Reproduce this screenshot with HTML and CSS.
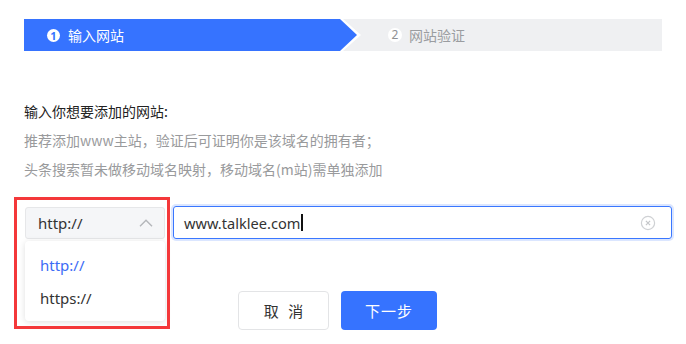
FILE: index.html
```html
<!DOCTYPE html>
<html lang="zh-CN">
<head>
<meta charset="utf-8">
<title>添加网站</title>
<link rel="stylesheet" href="styles.css">
</head>
<body>
<div class="page">
  <div class="steps">
    <div class="step-active-wrap">
      <div class="step step-active">
        <span class="step-num">1</span>
        <span class="step-label">输入网站</span>
      </div>
    </div>
    <div class="step step-next">
      <span class="step-num">2</span>
      <span class="step-label">网站验证</span>
    </div>
  </div>

  <div class="intro">
    <p class="intro-title">输入你想要添加的网站:</p>
    <p class="intro-note">推荐添加www主站，验证后可证明你是该域名的拥有者；</p>
    <p class="intro-note">头条搜索暂未做移动域名映射，移动域名(m站)需单独添加</p>
  </div>

  <div class="form-row">
    <div class="select-wrap">
      <div class="select">
        <span class="select-value">http://</span>
        <svg class="chevron" width="14" height="8" viewBox="0 0 14 8"><path d="M1 7.2 L7 1.2 L13 7.2" fill="none" stroke="#b4b6ba" stroke-width="1.4"/></svg>
      </div>
      <ul class="dropdown">
        <li class="option option-selected">http://</li>
        <li class="option">https://</li>
      </ul>
      <div class="annot"></div>
    </div>
    <div class="input">
      <span class="input-text">www.talklee.com</span><span class="caret"></span>
      <svg class="clear" width="16" height="16" viewBox="0 0 16 16"><circle cx="8" cy="8" r="6.6" fill="none" stroke="#cfd1d4" stroke-width="1.2"/><path d="M5.9 5.9 L10.1 10.1 M10.1 5.9 L5.9 10.1" stroke="#c4c6c9" stroke-width="1.2"/></svg>
    </div>
  </div>

  <div class="actions">
    <button class="btn btn-cancel">取 消</button>
    <button class="btn btn-primary">下一步</button>
  </div>
</div>
</body>
</html>
```

FILE: styles.css
```css
* { box-sizing: border-box; }
html, body { margin: 0; padding: 0; background: #fff; }
body {
  font-family: "Noto Sans", "Noto Sans CJK SC", sans-serif;
  font-size: 14px;
  color: #222;
}
.page { padding: 19px 24px 0 24px; }

.steps {
  display: flex;
  height: 32px;
  width: 638px;
  background: #eff0f2;
}
.step-active-wrap {
  flex: none;
  width: 337px;
  height: 32px;
  background: #fff;
  clip-path: polygon(0 0, 319px 0, 337px 16px, 319px 32px, 0 32px);
}
.step {
  display: flex;
  align-items: center;
  height: 32px;
  font-family: "Noto Sans CJK SC", sans-serif;
  font-size: 14px;
}
.step-active {
  width: 333px;
  background: #3673ff;
  clip-path: polygon(0 0, 316px 0, 333px 16px, 316px 32px, 0 32px);
  padding-left: 23px;
  color: #fff;
}
.step-next {
  padding-left: 27px;
  color: #9a9ca0;
}
.step-num {
  width: 13px;
  height: 13px;
  border-radius: 50%;
  background: #fff;
  display: flex;
  align-items: center;
  justify-content: center;
  font-family: "Noto Sans", sans-serif;
  font-size: 11px;
  font-weight: 700;
  line-height: 1;
  margin-right: 8px;
}
.step-active .step-num { color: #3673ff; }
.step-next .step-num { color: #8f9194; font-weight: 400; font-size: 12px; width: 14px; height: 14px; margin-right: 7px; }

.intro { margin-top: 46px; }
.intro p {
  margin: 0;
  line-height: 29px;
  font-family: "Noto Sans CJK SC", sans-serif;
  font-size: 14px;
}
.intro-title { color: #222; }
.intro-note { color: #999a9c; }

.form-row {
  display: flex;
  align-items: flex-start;
  margin-top: 22px;
}
.select-wrap {
  flex: none;
  position: relative;
  margin-left: 1px;
  margin-top: 1px;
}
.select {
  width: 140px;
  height: 32px;
  background: #f5f6f8;
  border: 1px solid #e6e7e9;
  border-radius: 3px;
  display: flex;
  align-items: center;
  justify-content: space-between;
  padding: 0 11px 0 12px;
  font-size: 15px;
  color: #333;
}
.chevron { display: block; }
.dropdown {
  position: absolute;
  left: 0;
  top: 34px;
  width: 140px;
  margin: 0;
  padding: 8px 0 6px;
  list-style: none;
  background: #fff;
  border-radius: 4px;
  box-shadow: 0 1px 6px rgba(0, 0, 0, 0.13);
}
.option {
  height: 33px;
  line-height: 33px;
  padding-left: 15px;
  font-size: 15px;
  color: #333;
}
.option-selected { color: #3c6cf6; }
.annot {
  position: absolute;
  left: -11px;
  top: -10px;
  width: 156px;
  height: 132px;
  border: 3px solid #f4383a;
}

.input {
  flex: none;
  margin-left: 8px;
  width: 499px;
  height: 33px;
  border: 1px solid #3a77ff;
  border-radius: 3px;
  box-shadow: 0 0 0 2px rgba(54, 115, 255, 0.18);
  display: flex;
  align-items: center;
  padding-left: 10px;
  padding-right: 15px;
  font-size: 14.6px;
  color: #333;
}
.caret {
  display: inline-block;
  width: 1.5px;
  height: 17px;
  background: #111;
  margin-left: 1px;
}
.clear { margin-left: auto; display: block; }

.actions {
  display: flex;
  gap: 12px;
  margin-top: 52px;
  padding-left: 214px;
}
.btn {
  height: 39px;
  border-radius: 4px;
  font-family: "Noto Sans CJK SC", sans-serif;
  font-size: 15px;
  padding: 0;
  cursor: pointer;
}
.btn-cancel {
  width: 91px;
  background: #fff;
  border: 1px solid #e3e4e6;
  color: #333;
  word-spacing: 6px;
}
.btn-primary {
  width: 96px;
  background: #3673ff;
  border: none;
  color: #fff;
  letter-spacing: 1px;
}
```
